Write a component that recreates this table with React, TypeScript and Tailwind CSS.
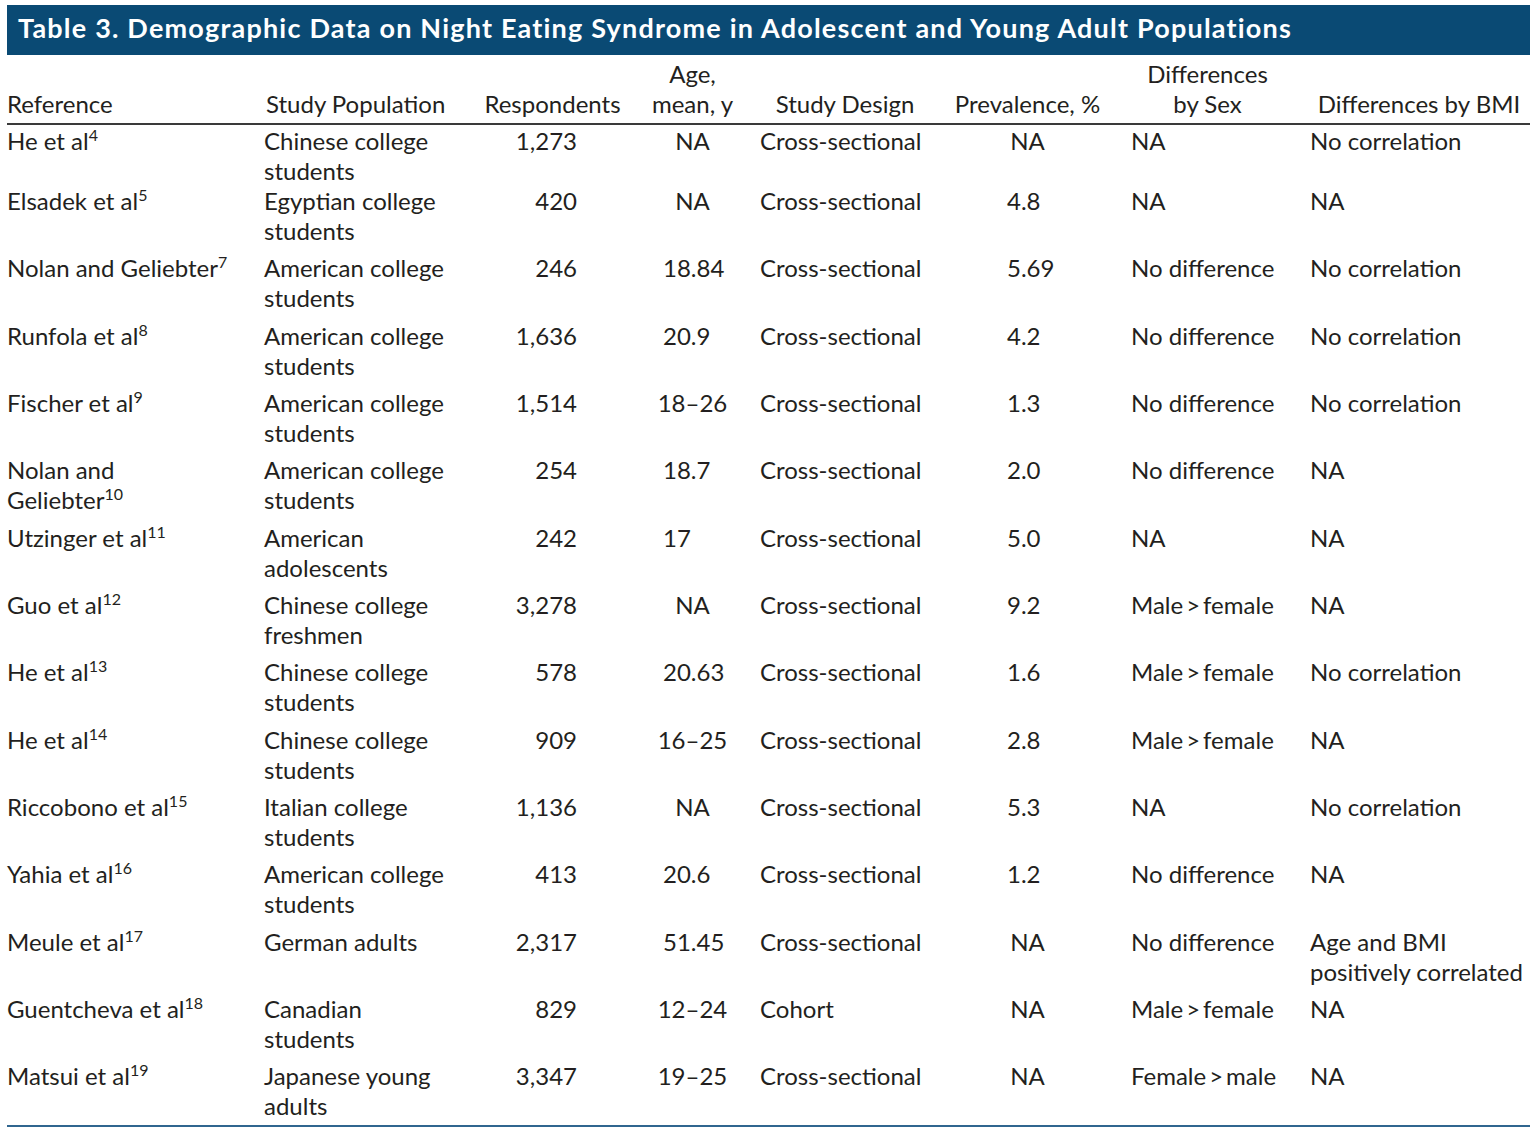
import React from 'react';

type Row = {
  ref: React.ReactNode;
  pop: React.ReactNode;
  n: string;
  age: string;
  ageAlign: 'c' | 'l';
  design: string;
  prev: string;
  sex: string;
  bmi: React.ReactNode;
};

const Sup: React.FC<{ children: React.ReactNode }> = ({ children }) => (
  <sup className="text-[16px] top-[-9px]">{children}</sup>
);

const gt = (a: string, b: string) => `${a}\u2009>\u2009${b}`;

const rows: Row[] = [
  { ref: <>He et al<Sup>4</Sup></>, pop: <>Chinese college<br />students</>, n: '1,273', age: 'NA', ageAlign: 'c', design: 'Cross-sectional', prev: 'NA', sex: 'NA', bmi: 'No correlation' },
  { ref: <>Elsadek et al<Sup>5</Sup></>, pop: <>Egyptian college<br />students</>, n: '420', age: 'NA', ageAlign: 'c', design: 'Cross-sectional', prev: '4.8', sex: 'NA', bmi: 'NA' },
  { ref: <>Nolan and Geliebter<Sup>7</Sup></>, pop: <>American college<br />students</>, n: '246', age: '18.84', ageAlign: 'l', design: 'Cross-sectional', prev: '5.69', sex: 'No difference', bmi: 'No correlation' },
  { ref: <>Runfola et al<Sup>8</Sup></>, pop: <>American college<br />students</>, n: '1,636', age: '20.9', ageAlign: 'l', design: 'Cross-sectional', prev: '4.2', sex: 'No difference', bmi: 'No correlation' },
  { ref: <>Fischer et al<Sup>9</Sup></>, pop: <>American college<br />students</>, n: '1,514', age: '18–26', ageAlign: 'c', design: 'Cross-sectional', prev: '1.3', sex: 'No difference', bmi: 'No correlation' },
  { ref: <>Nolan and<br />Geliebter<Sup>10</Sup></>, pop: <>American college<br />students</>, n: '254', age: '18.7', ageAlign: 'l', design: 'Cross-sectional', prev: '2.0', sex: 'No difference', bmi: 'NA' },
  { ref: <>Utzinger et al<Sup>11</Sup></>, pop: <>American<br />adolescents</>, n: '242', age: '17', ageAlign: 'l', design: 'Cross-sectional', prev: '5.0', sex: 'NA', bmi: 'NA' },
  { ref: <>Guo et al<Sup>12</Sup></>, pop: <>Chinese college<br />freshmen</>, n: '3,278', age: 'NA', ageAlign: 'c', design: 'Cross-sectional', prev: '9.2', sex: gt('Male', 'female'), bmi: 'NA' },
  { ref: <>He et al<Sup>13</Sup></>, pop: <>Chinese college<br />students</>, n: '578', age: '20.63', ageAlign: 'l', design: 'Cross-sectional', prev: '1.6', sex: gt('Male', 'female'), bmi: 'No correlation' },
  { ref: <>He et al<Sup>14</Sup></>, pop: <>Chinese college<br />students</>, n: '909', age: '16–25', ageAlign: 'c', design: 'Cross-sectional', prev: '2.8', sex: gt('Male', 'female'), bmi: 'NA' },
  { ref: <>Riccobono et al<Sup>15</Sup></>, pop: <>Italian college<br />students</>, n: '1,136', age: 'NA', ageAlign: 'c', design: 'Cross-sectional', prev: '5.3', sex: 'NA', bmi: 'No correlation' },
  { ref: <>Yahia et al<Sup>16</Sup></>, pop: <>American college<br />students</>, n: '413', age: '20.6', ageAlign: 'l', design: 'Cross-sectional', prev: '1.2', sex: 'No difference', bmi: 'NA' },
  { ref: <>Meule et al<Sup>17</Sup></>, pop: 'German adults', n: '2,317', age: '51.45', ageAlign: 'l', design: 'Cross-sectional', prev: 'NA', sex: 'No difference', bmi: <>Age and BMI<br />positively correlated</> },
  { ref: <>Guentcheva et al<Sup>18</Sup></>, pop: <>Canadian<br />students</>, n: '829', age: '12–24', ageAlign: 'c', design: 'Cohort', prev: 'NA', sex: gt('Male', 'female'), bmi: 'NA' },
  { ref: <>Matsui et al<Sup>19</Sup></>, pop: <>Japanese young<br />adults</>, n: '3,347', age: '19–25', ageAlign: 'c', design: 'Cross-sectional', prev: 'NA', sex: gt('Female', 'male'), bmi: 'NA' },
];

const cols = 'grid grid-cols-[257px_206px_165px_115px_190px_175px_185px_230px]';

const App: React.FC = () => {
  return (
    <div className="w-[1536px] h-[1135px] bg-white text-[#231f20] font-['Lato',sans-serif] text-[24px] leading-[30px] whitespace-nowrap">
      <div className="ml-[7px] w-[1523px] pt-[5px]">
        {/* title bar */}
        <div className="h-[50px] bg-[#0a4a74] text-white font-bold text-[27px] tracking-[1.2px] flex items-center pl-[11px] pb-[4px]">
          Table 3. Demographic Data on Night Eating Syndrome in Adolescent and Young Adult Populations
        </div>

        {/* header */}
        <div className={`${cols} h-[70px] items-end pb-[4px] border-b-2 border-[#3a3a3a]`}>
          <div>Reference</div>
          <div className="pl-[2px]">Study Population</div>
          <div className="text-center">Respondents</div>
          <div className="text-center">Age,<br />mean, y</div>
          <div className="text-center">Study Design</div>
          <div className="text-center">Prevalence, %</div>
          <div className="text-center">Differences<br />by Sex</div>
          <div className="text-center pl-[8px]">Differences by BMI</div>
        </div>

        {/* body */}
        <div className="pt-[1px] border-b-2 border-[#30668f]">
          {rows.map((r, i) => (
            <div
              key={i}
              className={`${cols} items-start ${i === 0 ? 'pb-0' : i === rows.length - 1 ? 'pb-[4px]' : 'pb-[7.35px]'}`}
            >
              <div>{r.ref}</div>
              <div>{r.pop}</div>
              <div className="text-right pr-[58px]">{r.n}</div>
              <div className={r.ageAlign === 'c' ? 'text-center' : 'pl-[28px]'}>{r.age}</div>
              <div className="pl-[10px]">{r.design}</div>
              <div className={r.prev === 'NA' ? 'text-center' : 'pl-[67px]'}>{r.prev}</div>
              <div className="pl-[16px]">{r.sex}</div>
              <div className="pl-[10px]">{r.bmi}</div>
            </div>
          ))}
        </div>
      </div>
    </div>
  );
};

export default App;
